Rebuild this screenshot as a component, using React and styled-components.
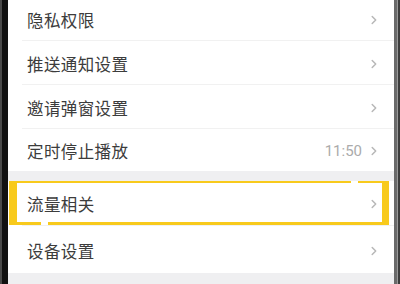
import React from 'react';
import styled, { createGlobalStyle } from 'styled-components';

const GlobalStyle = createGlobalStyle`
  html, body {
    margin: 0;
    padding: 0;
    background: #ffffff;
    overflow: hidden;
  }
  body {
    font-family: "Noto Sans CJK SC", "Noto Sans", sans-serif;
  }
`;

const Frame = styled.div`
  display: flex;
  width: 400px;
  height: 284px;
  overflow: hidden;
`;

const LeftEdge = styled.div`
  width: 6px;
  flex-shrink: 0;
  background: #111111;
  border-left: 2px solid #4a4a4a;
`;

const RightEdge = styled.div`
  width: 3px;
  flex-shrink: 0;
  background: #3c3c3c;
  border-left: 3px solid #6a6a6a;
  box-shadow: inset 1px 0 0 #9a9a9a;
`;

const Screen = styled.div`
  flex: 1;
  display: flex;
  flex-direction: column;
  background: #efeff1;
  gap: ${p => p.$gap || 0}px;
`;

const Group = styled.div`
  display: flex;
  flex-direction: column;
  background: #ffffff;
  margin-top: ${p => p.$offset || 0}px;
`;

const Row = styled.div`
  position: relative;
  display: flex;
  align-items: center;
  height: ${p => p.$h || 43}px;
  padding: 2px 17px 0 19px;
  box-sizing: border-box;
  background: #ffffff;
`;

const Divider = styled.div`
  height: 1px;
  margin-left: 14px;
  background: #f1f1f1;
`;

const Label = styled.span`
  flex: 1;
  font-size: 16.5px;
  color: #3c3c3c;
  letter-spacing: 0.4px;
`;

const Value = styled.span`
  font-family: "Roboto", "Liberation Sans", sans-serif;
  font-size: 15px;
  color: #ababab;
  margin-right: 9px;
`;

const Highlight = styled.div`
  position: absolute;
  left: 1px;
  top: 0;
  width: 380px;
  height: 44px;
  box-sizing: border-box;
  border-style: solid;
  border-color: #f8ca1c;
  border-width: 2px 7px 3px 8px;
  pointer-events: none;
`;

const BorderGap = styled.div`
  position: absolute;
  width: 7px;
  height: 3px;
  background: #ffffff;
  left: ${p => p.$x}px;
  ${p => (p.$bottom ? 'bottom: -3px;' : 'top: -2px;')}
`;

const Chevron = () => (
  <svg width="6" height="10" viewBox="0 0 6 10" fill="none">
    <path d="M1.2 1.5l3.5 3.5-3.5 3.5" stroke="#b8b8b8" strokeWidth="1.5" strokeLinecap="round" strokeLinejoin="round" />
  </svg>
);

const Item = ({ label, value, h }) => (
  <Row $h={h}>
    <Label>{label}</Label>
    {value && <Value>{value}</Value>}
    <Chevron />
  </Row>
);

export default function App() {
  return (
    <>
      <GlobalStyle />
      <Frame>
        <LeftEdge />
        <Screen $gap={10}>
          <Group $offset={-3}>
            <Item label="隐私权限" />
            <Divider />
            <Item label="推送通知设置" />
            <Divider />
            <Item label="邀请弹窗设置" />
            <Divider />
            <Item label="定时停止播放" value="11:50" h={42} />
          </Group>
          <Group>
            <Row $h={44}>
              <Label>流量相关</Label>
              <Chevron />
              <Highlight>
                <BorderGap $x={334} />
                <BorderGap $x={24} $bottom />
              </Highlight>
            </Row>
            <Divider />
            <Item label="设备设置" h={47} />
          </Group>
        </Screen>
        <RightEdge />
      </Frame>
    </>
  );
}
